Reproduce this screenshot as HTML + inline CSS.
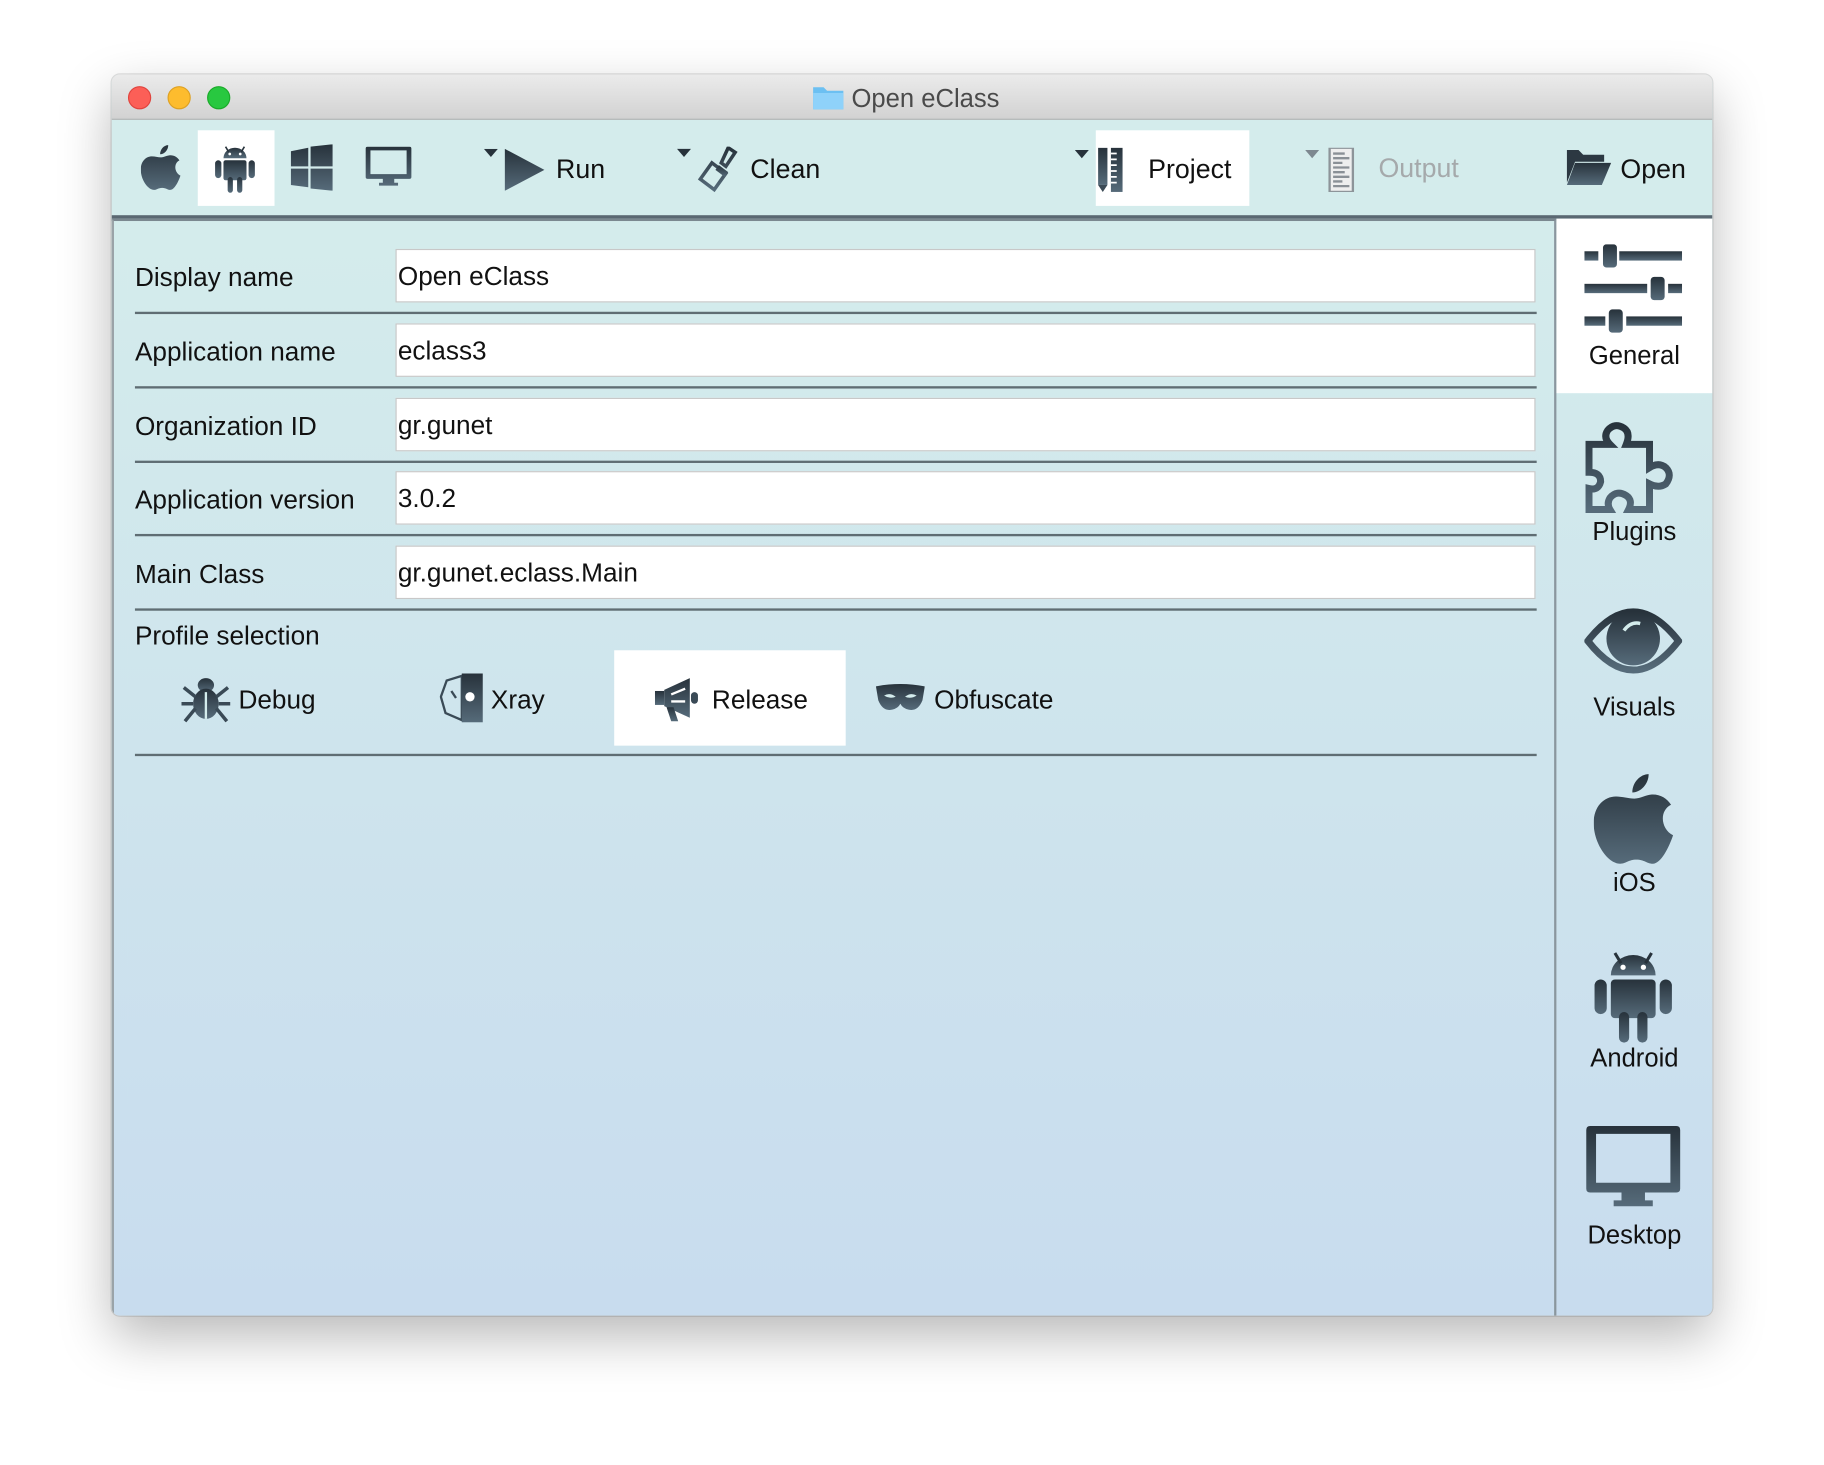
<!DOCTYPE html>
<html><head><meta charset="utf-8">
<style>
html,body{margin:0;padding:0;width:1824px;height:1464px;overflow:hidden;background:#fff;}
#s{position:absolute;left:0;top:0;width:1568px;height:1259px;transform:scale(1.163265);transform-origin:0 0;font-family:"Liberation Sans",sans-serif;color:#111;}
.abs{position:absolute;}
.win{left:96px;top:64px;width:1376px;height:1067px;border-radius:7px;background:#d4ecec;box-shadow:0 18px 45px rgba(0,0,0,.28),0 0 0 1px rgba(0,0,0,.12);overflow:hidden;}
.title{left:0;top:0;width:1376px;height:38px;background:linear-gradient(#ebebeb,#d2d2d2);border-bottom:1px solid #b0b0b0;}
.dot{top:10px;width:20px;height:20px;border-radius:50%;}
.tb{font-size:23px;margin-top:1px;}
.lbl{font-size:22.5px;left:20px;margin-top:1px;}
.fld{left:244px;width:980px;height:46px;background:#fff;border:1px solid #c8c8c8;font-size:22.5px;line-height:46px;box-sizing:border-box;padding-left:1px;}
.sep{left:20px;width:1205px;height:2px;background:#5f6d73;}
.side{left:1242px;width:134px;text-align:center;font-size:22px;}
</style></head><body><div id="s">
<svg width="0" height="0" style="position:absolute">
<defs>
<linearGradient id="g" x1="0" y1="0" x2="0" y2="1"><stop offset="0" stop-color="#27323b"/><stop offset="1" stop-color="#566b7a"/></linearGradient>
<symbol id="apple" viewBox="0 0 40 48"><path fill="url(#g)" d="M27 2c0 5-4 9-8 9 0-5 4-9 8-9zM20 14c3 0 6-2 9-2 4 0 7 2 9 5-6 3-5 12 1 15-2 6-6 14-10 14-3 0-4-2-8-2s-5 2-8 2C7 46 0 36 0 26c0-8 5-13 11-13 3 0 6 1 9 1z"/></symbol>
<symbol id="android" viewBox="0 0 40 48"><g fill="url(#g)"><path d="M9 14a11 10 0 0 1 22 0z"/><path d="M11 3l3 5M29 3l-3 5" stroke="#27323b" stroke-width="1.5"/><rect x="9" y="16" width="22" height="19" rx="2"/><rect x="1" y="16" width="6" height="17" rx="3"/><rect x="33" y="16" width="6" height="17" rx="3"/><rect x="13" y="32" width="5" height="15" rx="2.5"/><rect x="22" y="32" width="5" height="15" rx="2.5"/></g><circle cx="15" cy="10" r="1.3" fill="#fff"/><circle cx="25" cy="10" r="1.3" fill="#fff"/></symbol>
<symbol id="mon" viewBox="0 0 48 44"><path fill="url(#g)" fill-rule="evenodd" d="M2 0h44q2 0 2 2v30q0 2-2 2H30v4h4v3H14v-3h4v-4H2q-2 0-2-2V2q0-2 2-2zM5 4v25h38V4z"/></symbol>
</defs></svg>

<div class="abs win">
 <div class="abs title">
  <div class="abs dot" style="left:14px;background:#fc5f57;border:1px solid #e0443e;box-sizing:border-box"></div>
  <div class="abs dot" style="left:48px;background:#fdbc2e;border:1px solid #dea123;box-sizing:border-box"></div>
  <div class="abs dot" style="left:82px;background:#28c840;border:1px solid #1aab29;box-sizing:border-box"></div>
  <svg class="abs" style="left:602px;top:9px" width="28" height="22"><path d="M1 2h9l3 3h14v16H1z" fill="#6cc0f2"/><path d="M1 7h26v14H1z" fill="#8fd2fa"/></svg>
  <div class="abs" style="left:636px;top:8px;font-size:22px;color:#4a4a4a">Open eClass</div>
 </div>
 <div class="abs" style="left:74px;top:48px;width:66px;height:65px;background:#fff"></div>
 <div class="abs" style="left:846px;top:48px;width:132px;height:65px;background:#fff"></div>
 <svg class="abs" style="left:25px;top:59px" width="35" height="42"><use href="#apple"/></svg>
 <svg class="abs" style="left:88px;top:59px" width="36" height="44"><use href="#android"/></svg>
 <svg class="abs" style="left:154px;top:60px" width="36" height="40" viewBox="0 0 36 40"><path fill="url(#g)" d="M0 6l15-3v16H0zM17 2l19-2v19H17zM0 21h15v16L0 35zM17 21h19v19l-19-2z"/></svg>
 <svg class="abs" style="left:218px;top:62px" width="40" height="36"><use href="#mon"/></svg>
 <svg class="abs" style="left:320px;top:64px" width="56" height="36"><path d="M0 0h12l-6 7z" fill="#27323b"/><path d="M18 0l34 18-34 18z" fill="url(#g)"/></svg>
 <div class="abs tb" style="left:382px;top:67px">Run</div>
 <svg class="abs" style="left:486px;top:62px" width="56" height="40"><path d="M0 2h12l-6 7z" fill="#27323b"/><path d="M44 1l6 4-8 12-4-3zM30 14l12 9-10 14-12-9z" fill="none" stroke="url(#g)" stroke-width="3"/><path d="M36 16l8 6-3 4-8-6z" fill="url(#g)"/></svg>
 <div class="abs tb" style="left:549px;top:67px">Clean</div>
 <svg class="abs" style="left:828px;top:63px" width="46" height="38"><path d="M0 2h12l-6 7z" fill="#27323b"/><rect x="20" y="0" width="8" height="32" fill="url(#g)"/><path d="M20 32h8l-4 6z" fill="#3b4a55"/><rect x="31" y="0" width="10" height="38" fill="url(#g)"/><path d="M31 5h5M31 10h5M31 15h5M31 20h5M31 25h5M31 30h5" stroke="#fff" stroke-width="1.5"/></svg>
 <div class="abs tb" style="left:891px;top:67px">Project</div>
 <svg class="abs" style="left:1026px;top:63px" width="46" height="38"><path d="M0 2h12l-6 7z" fill="#7d8890"/><rect x="21" y="0" width="20" height="38" fill="#eee" stroke="#8d9499" stroke-width="2"/><path d="M24 5h10M24 9h14M24 13h8M24 17h14M24 21h10M24 25h14M24 29h8M24 33h14" stroke="#8a9096" stroke-width="2"/></svg>
 <div class="abs tb" style="left:1089px;top:66px;color:#a5a9ab">Output</div>
 <svg class="abs" style="left:1250px;top:63px" width="40" height="34"><path d="M1 2h10l4 4h18v6H8L1 30z" fill="#2c3842"/><path d="M8 13h31l-8 19H1z" fill="url(#g)"/></svg>
 <div class="abs tb" style="left:1297px;top:67px">Open</div>
 <div class="abs" style="left:0;top:121px;width:1376px;height:3px;background:#5a6872"></div>
 <div class="abs" style="left:0;top:124px;width:1242px;height:943px;background:linear-gradient(#d4ecec,#c8dcee);border-left:2px solid #9aa3a8;border-top:2px solid #7b8890;box-sizing:border-box;border-right:2px solid #8a969e"></div>
 <div class="abs lbl" style="top:161px">Display name</div>
 <div class="abs fld" style="top:150px">Open eClass</div>
 <div class="abs sep" style="top:204px"></div>
 <div class="abs lbl" style="top:225px">Application name</div>
 <div class="abs fld" style="top:214px">eclass3</div>
 <div class="abs sep" style="top:268px"></div>
 <div class="abs lbl" style="top:289px">Organization ID</div>
 <div class="abs fld" style="top:278px">gr.gunet</div>
 <div class="abs sep" style="top:332px"></div>
 <div class="abs lbl" style="top:352px">Application version</div>
 <div class="abs fld" style="top:341px">3.0.2</div>
 <div class="abs sep" style="top:395px"></div>
 <div class="abs lbl" style="top:416px">Main Class</div>
 <div class="abs fld" style="top:405px">gr.gunet.eclass.Main</div>
 <div class="abs sep" style="top:459px"></div>
 <div class="abs lbl" style="top:469px">Profile selection</div>
 <div class="abs" style="left:432px;top:495px;width:199px;height:82px;background:#fff"></div>
 <svg class="abs" style="left:60px;top:517px" width="42" height="40" viewBox="0 0 42 40"><g fill="url(#g)"><ellipse cx="21" cy="8" rx="7" ry="6"/><ellipse cx="21" cy="24" rx="11" ry="13"/><path d="M2 10l10 8M40 10l-10 8M0 24h10M42 24h-10M3 39l9-11M39 39l-9-11" stroke="#3a4a56" stroke-width="3"/></g><path d="M21 14v23" stroke="#d4ecec" stroke-width="2"/></svg>
 <div class="abs lbl" style="left:109px;top:524px">Debug</div>
 <svg class="abs" style="left:282px;top:515px" width="38" height="42" viewBox="0 0 38 42"><path d="M19 2L6 6 1 20l4 14 14 6z" fill="none" stroke="#3a4a56" stroke-width="2"/><path d="M19 0h18v42H19z" fill="url(#g)"/><circle cx="26" cy="20" r="4" fill="#fff"/><path d="M10 15l4 6" stroke="#3a4a56" stroke-width="2"/></svg>
 <div class="abs lbl" style="left:326px;top:524px">Xray</div>
 <svg class="abs" style="left:467px;top:517px" width="42" height="40" viewBox="0 0 42 40"><g fill="url(#g)"><rect x="0" y="13" width="8" height="12"/><path d="M8 12l22-10v34L8 26z"/><path d="M10 27h6l4 12h-6z"/></g><path d="M14 16l12-5M14 22h12" stroke="#fff" stroke-width="2"/><rect x="31" y="14" width="6" height="10" rx="3" fill="#3a4a56"/></svg>
 <div class="abs lbl" style="left:516px;top:524px">Release</div>
 <svg class="abs" style="left:657px;top:524px" width="42" height="24" viewBox="0 0 42 24"><path fill="url(#g)" d="M0 2q21-4 42 0l-2 12q-4 10-12 8-5-1-7-5-2 4-7 5-8 2-12-8z"/><path d="M7 10q5-3 10 1-5 2-10-1zM35 10q-5-3-10 1 5 2 10-1z" fill="#d4ecec"/></svg>
 <div class="abs lbl" style="left:707px;top:524px">Obfuscate</div>
 <div class="abs sep" style="top:584px"></div>
 <div class="abs" style="left:1242px;top:124px;width:134px;height:943px;background:linear-gradient(#d4ecec,#c8dcee)"></div>
 <div class="abs" style="left:1242px;top:124px;width:134px;height:150px;background:#fff"></div>
 <svg class="abs" style="left:1266px;top:146px" width="84" height="76" viewBox="0 0 84 76"><g fill="url(#g)"><rect x="0" y="6" width="12" height="8"/><rect x="30" y="6" width="54" height="8"/><rect x="16" y="0" width="12" height="20" rx="3"/><rect x="0" y="34" width="54" height="8"/><rect x="72" y="34" width="12" height="8"/><rect x="57" y="28" width="12" height="20" rx="3"/><rect x="0" y="62" width="18" height="8"/><rect x="36" y="62" width="48" height="8"/><rect x="21" y="56" width="12" height="20" rx="3"/></g></svg>
 <div class="abs side" style="top:229px">General</div>
 <svg class="abs" style="left:1266px;top:296px" width="84" height="82" viewBox="0 0 84 82"><path fill="none" stroke="url(#g)" stroke-width="6" d="M4 22h18q-6-6-2-12 6-7 14-2 6 4 2 14h20v20q8-5 14 0 6 6 0 14-6 4-14 0v22H38q4-8-2-12-8-5-14 2-3 5 0 10H4V60q8 2 10-6 0-8-10-8z"/></svg>
 <div class="abs side" style="top:380px">Plugins</div>
 <svg class="abs" style="left:1266px;top:452px" width="84" height="70" viewBox="0 0 84 70"><path d="M3 35Q42-15 81 35 42 85 3 35z" fill="none" stroke="url(#g)" stroke-width="6"/><circle cx="42" cy="33" r="23" fill="url(#g)"/><path d="M34 26q6-8 14-6" stroke="#d4ecec" stroke-width="3" fill="none"/></svg>
 <div class="abs side" style="top:531px">Visuals</div>
 <svg class="abs" style="left:1274px;top:598px" width="70" height="84"><use href="#apple"/></svg>
 <div class="abs side" style="top:682px">iOS</div>
 <svg class="abs" style="left:1272px;top:750px" width="72" height="84"><use href="#android"/></svg>
 <div class="abs side" style="top:833px">Android</div>
 <svg class="abs" style="left:1266px;top:904px" width="84" height="74"><use href="#mon"/></svg>
 <div class="abs side" style="top:985px">Desktop</div>
</div>
</div></body></html>
